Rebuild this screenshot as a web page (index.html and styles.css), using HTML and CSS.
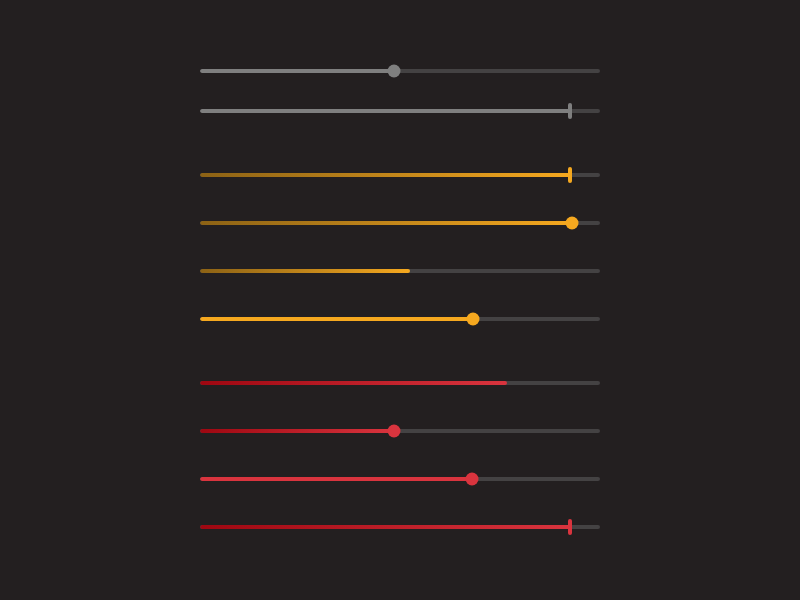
FILE: index.html
```html
<!DOCTYPE html>
<html lang="en">
<head>
  <meta charset="UTF-8">
  <title>Sliders</title>
  <link rel="stylesheet" href="styles.css">
</head>
<body>

  <div class="panel">
    <!-- neutral -->
    <div class="group group-tight">
      <div class="slider gray"><div class="track"><div class="fill" style="width: 48.5%"></div></div><span class="knob" style="left: 48.5%"></span></div>
      <div class="slider gray"><div class="track"><div class="fill" style="width: 92.5%"></div></div><span class="handle" style="left: 92.5%"></span></div>
    </div>

    <!-- amber -->
    <div class="group">
      <div class="slider amber"><div class="track"><div class="fill grad" style="width: 92.5%"></div></div><span class="handle" style="left: 92.5%"></span></div>
      <div class="slider amber"><div class="track"><div class="fill grad" style="width: 93%"></div></div><span class="knob" style="left: 93%"></span></div>
      <div class="slider amber"><div class="track"><div class="fill grad" style="width: 52.5%"></div></div></div>
      <div class="slider amber"><div class="track"><div class="fill" style="width: 68.25%"></div></div><span class="knob" style="left: 68.25%"></span></div>
    </div>

    <!-- red -->
    <div class="group">
      <div class="slider red"><div class="track"><div class="fill grad" style="width: 76.75%"></div></div></div>
      <div class="slider red"><div class="track"><div class="fill grad" style="width: 48.5%"></div></div><span class="knob" style="left: 48.5%"></span></div>
      <div class="slider red"><div class="track"><div class="fill" style="width: 68%"></div></div><span class="knob" style="left: 68%"></span></div>
      <div class="slider red"><div class="track"><div class="fill grad" style="width: 92.5%"></div></div><span class="handle" style="left: 92.5%"></span></div>
    </div>
  </div>

</body>
</html>
```

FILE: styles.css
```css
body {
  margin: 0;
  background-color: #231f20;
  font-family: "Liberation Sans", Arial, sans-serif;
}

.panel {
  width: 400px;
  margin: 0 auto;
  padding-top: 63px;
  display: flex;
  flex-direction: column;
  gap: 48px;
}

.group {
  display: flex;
  flex-direction: column;
  gap: 32px;
}

.group-tight {
  gap: 24px;
}

.slider {
  position: relative;
  height: 16px;
  display: flex;
  align-items: center;
}

.track {
  width: 100%;
  height: 4px;
  border-radius: 2px;
  background-color: #444243;
  overflow: hidden;
}

.fill {
  height: 100%;
  border-radius: 2px;
}

.knob {
  position: absolute;
  top: 50%;
  width: 13px;
  height: 13px;
  border-radius: 50%;
  transform: translate(-50%, -50%);
}

.handle {
  position: absolute;
  top: 0;
  width: 4px;
  height: 16px;
  border-radius: 2px;
  transform: translateX(-50%);
}

/* colours */
.gray .fill, .gray .knob, .gray .handle {
  background: #7f7f7f;
}

.amber .fill, .amber .knob, .amber .handle {
  background: #f5a81f;
}

.amber .fill.grad {
  background: linear-gradient(to right, #8c6215, #f5a81f);
}

.red .fill, .red .knob, .red .handle {
  background: #d9343e;
}

.red .fill.grad {
  background: linear-gradient(to right, #9e0711, #d9343e);
}
```
